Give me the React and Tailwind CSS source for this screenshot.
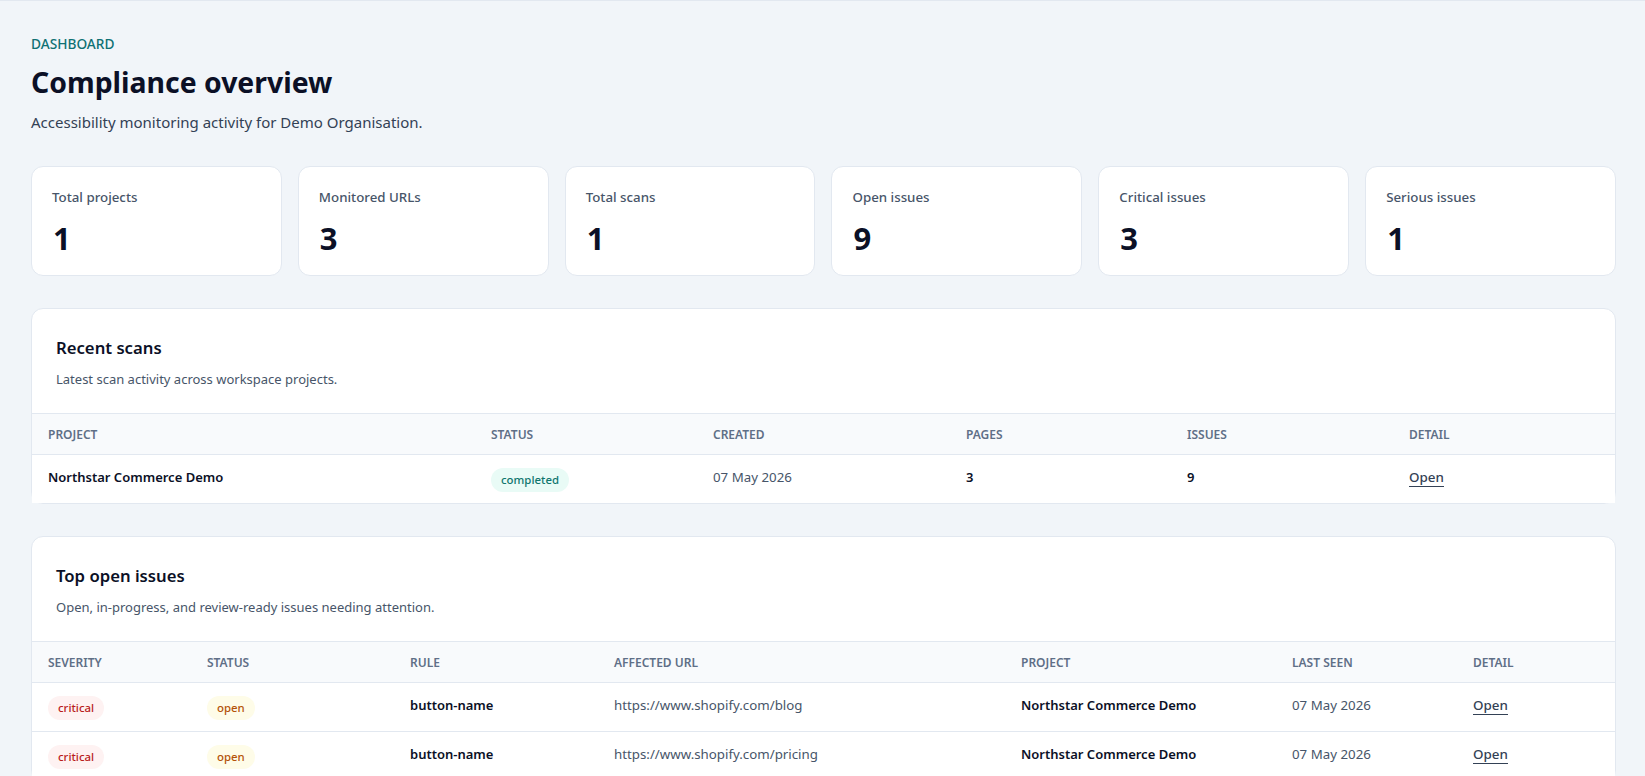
const FONT = { fontFamily: '"Noto Sans", "Open Sans", sans-serif' };

const STATS = [
  ["Total projects", 1],
  ["Monitored URLs", 3],
  ["Total scans", 1],
  ["Open issues", 9],
  ["Critical issues", 3],
  ["Serious issues", 1],
];

const ISSUES = [
  "https://www.shopify.com/blog",
  "https://www.shopify.com/pricing",
];

const PILL_TONES = {
  completed: "bg-[#e9fbf6] text-[#0f766e]",
  critical: "bg-[#fef2f2] text-[#b91c1c]",
  open: "bg-[#fefce8] text-[#b45309]",
};

function Pill({ label }) {
  return (
    <span className={`inline-block rounded-full px-[10px] py-[4px] text-[11.4px] leading-[16px] font-medium ${PILL_TONES[label]}`}>
      {label}
    </span>
  );
}

function Th({ children, className = "" }) {
  return (
    <th className={`border-b border-[#e2e8f0] px-4 pt-[2px] pb-0 h-[41px] text-left text-[12px] font-semibold uppercase text-[#5f6f87] ${className}`}>
      {children}
    </th>
  );
}

function Td({ children, strong, muted, pill, last }) {
  const pad = pill ? "pt-0" : strong || muted ? "pb-[2px]" : "pb-[5px]";
  return (
    <td className={`bg-white px-4 ${pad} ${last ? "h-[48px]" : "h-[49px] border-b border-[#e2e8f0]"} ${strong ? "text-[13px] font-semibold text-[#0b1026]" : ""} ${muted ? "text-[13.3px] text-[#475569]" : ""}`}>
      {children}
    </td>
  );
}

function OpenLink() {
  return <a href="#" className="border-b border-[#334155] text-[13.4px] font-medium text-[#334155]">Open</a>;
}

function Section({ title, description, className, children }) {
  return (
    <section className={`rounded-xl border border-[#e2e8f0] bg-white ${className}`}>
      <div className="h-[104px] px-6 pt-[25px]">
        <h2 className="text-[16.7px] leading-[28px] font-semibold text-[#0b1026]">{title}</h2>
        <p className="mt-[7px] text-[13px] leading-[20px] text-[#475569]">{description}</p>
      </div>
      {children}
    </section>
  );
}

export default function App() {
  return (
    <div style={FONT} className="h-screen overflow-hidden border-t border-[#e2e8f0] bg-[#f1f5f9] pl-[31px] pr-[29px] pt-[33px]">
      <p className="text-[13.7px] leading-[20px] font-medium text-[#0f7174]">DASHBOARD</p>
      <h1 className="mt-[8px] text-[28.4px] leading-[40px] font-bold text-[#0b1026]">Compliance overview</h1>
      <p className="mt-[8px] text-[15px] leading-[24px] text-[#334155]">Accessibility monitoring activity for Demo Organisation.</p>

      <div className="mt-[32px] grid grid-cols-6 gap-4">
        {STATS.map(([label, value]) => (
          <div key={label} className="h-[110px] rounded-xl border border-[#e2e8f0] bg-white px-5 pt-5">
            <div className="text-[13.3px] leading-[20px] font-medium text-[#475569]">{label}</div>
            <div className="mt-[11px] pl-[1px] text-[31px] leading-[40px] font-bold text-[#0b1026]">{value}</div>
          </div>
        ))}
      </div>

      <Section className="mt-[32px]" title="Recent scans" description="Latest scan activity across workspace projects.">
        <table className="w-full table-fixed border-collapse">
          <thead className="bg-[#f8fafc]">
            <tr className="border-t border-[#e2e8f0]">
              <Th className="w-[443px]">Project</Th>
              <Th className="w-[222px]">Status</Th>
              <Th className="w-[253px]">Created</Th>
              <Th className="w-[221px]">Pages</Th>
              <Th className="w-[222px]">Issues</Th>
              <Th>Detail</Th>
            </tr>
          </thead>
          <tbody>
            <tr>
              <Td strong last>Northstar Commerce Demo</Td>
              <Td pill last><Pill label="completed" /></Td>
              <Td muted last>07 May 2026</Td>
              <Td strong last>3</Td>
              <Td strong last>9</Td>
              <Td last><OpenLink /></Td>
            </tr>
          </tbody>
        </table>
      </Section>

      <Section className="mt-[32px]" title="Top open issues" description="Open, in-progress, and review-ready issues needing attention.">
        <table className="w-full table-fixed border-collapse">
          <thead className="bg-[#f8fafc]">
            <tr className="border-t border-[#e2e8f0]">
              <Th className="w-[159px]">Severity</Th>
              <Th className="w-[203px]">Status</Th>
              <Th className="w-[204px]">Rule</Th>
              <Th className="w-[407px]">Affected URL</Th>
              <Th className="w-[271px]">Project</Th>
              <Th className="w-[181px]">Last seen</Th>
              <Th>Detail</Th>
            </tr>
          </thead>
          <tbody>
            {ISSUES.map(url => (
              <tr key={url}>
                <Td pill><Pill label="critical" /></Td>
                <Td pill><Pill label="open" /></Td>
                <Td strong>button-name</Td>
                <Td muted>{url}</Td>
                <Td strong>Northstar Commerce Demo</Td>
                <Td muted>07 May 2026</Td>
                <Td><OpenLink /></Td>
              </tr>
            ))}
          </tbody>
        </table>
      </Section>
    </div>
  );
}
